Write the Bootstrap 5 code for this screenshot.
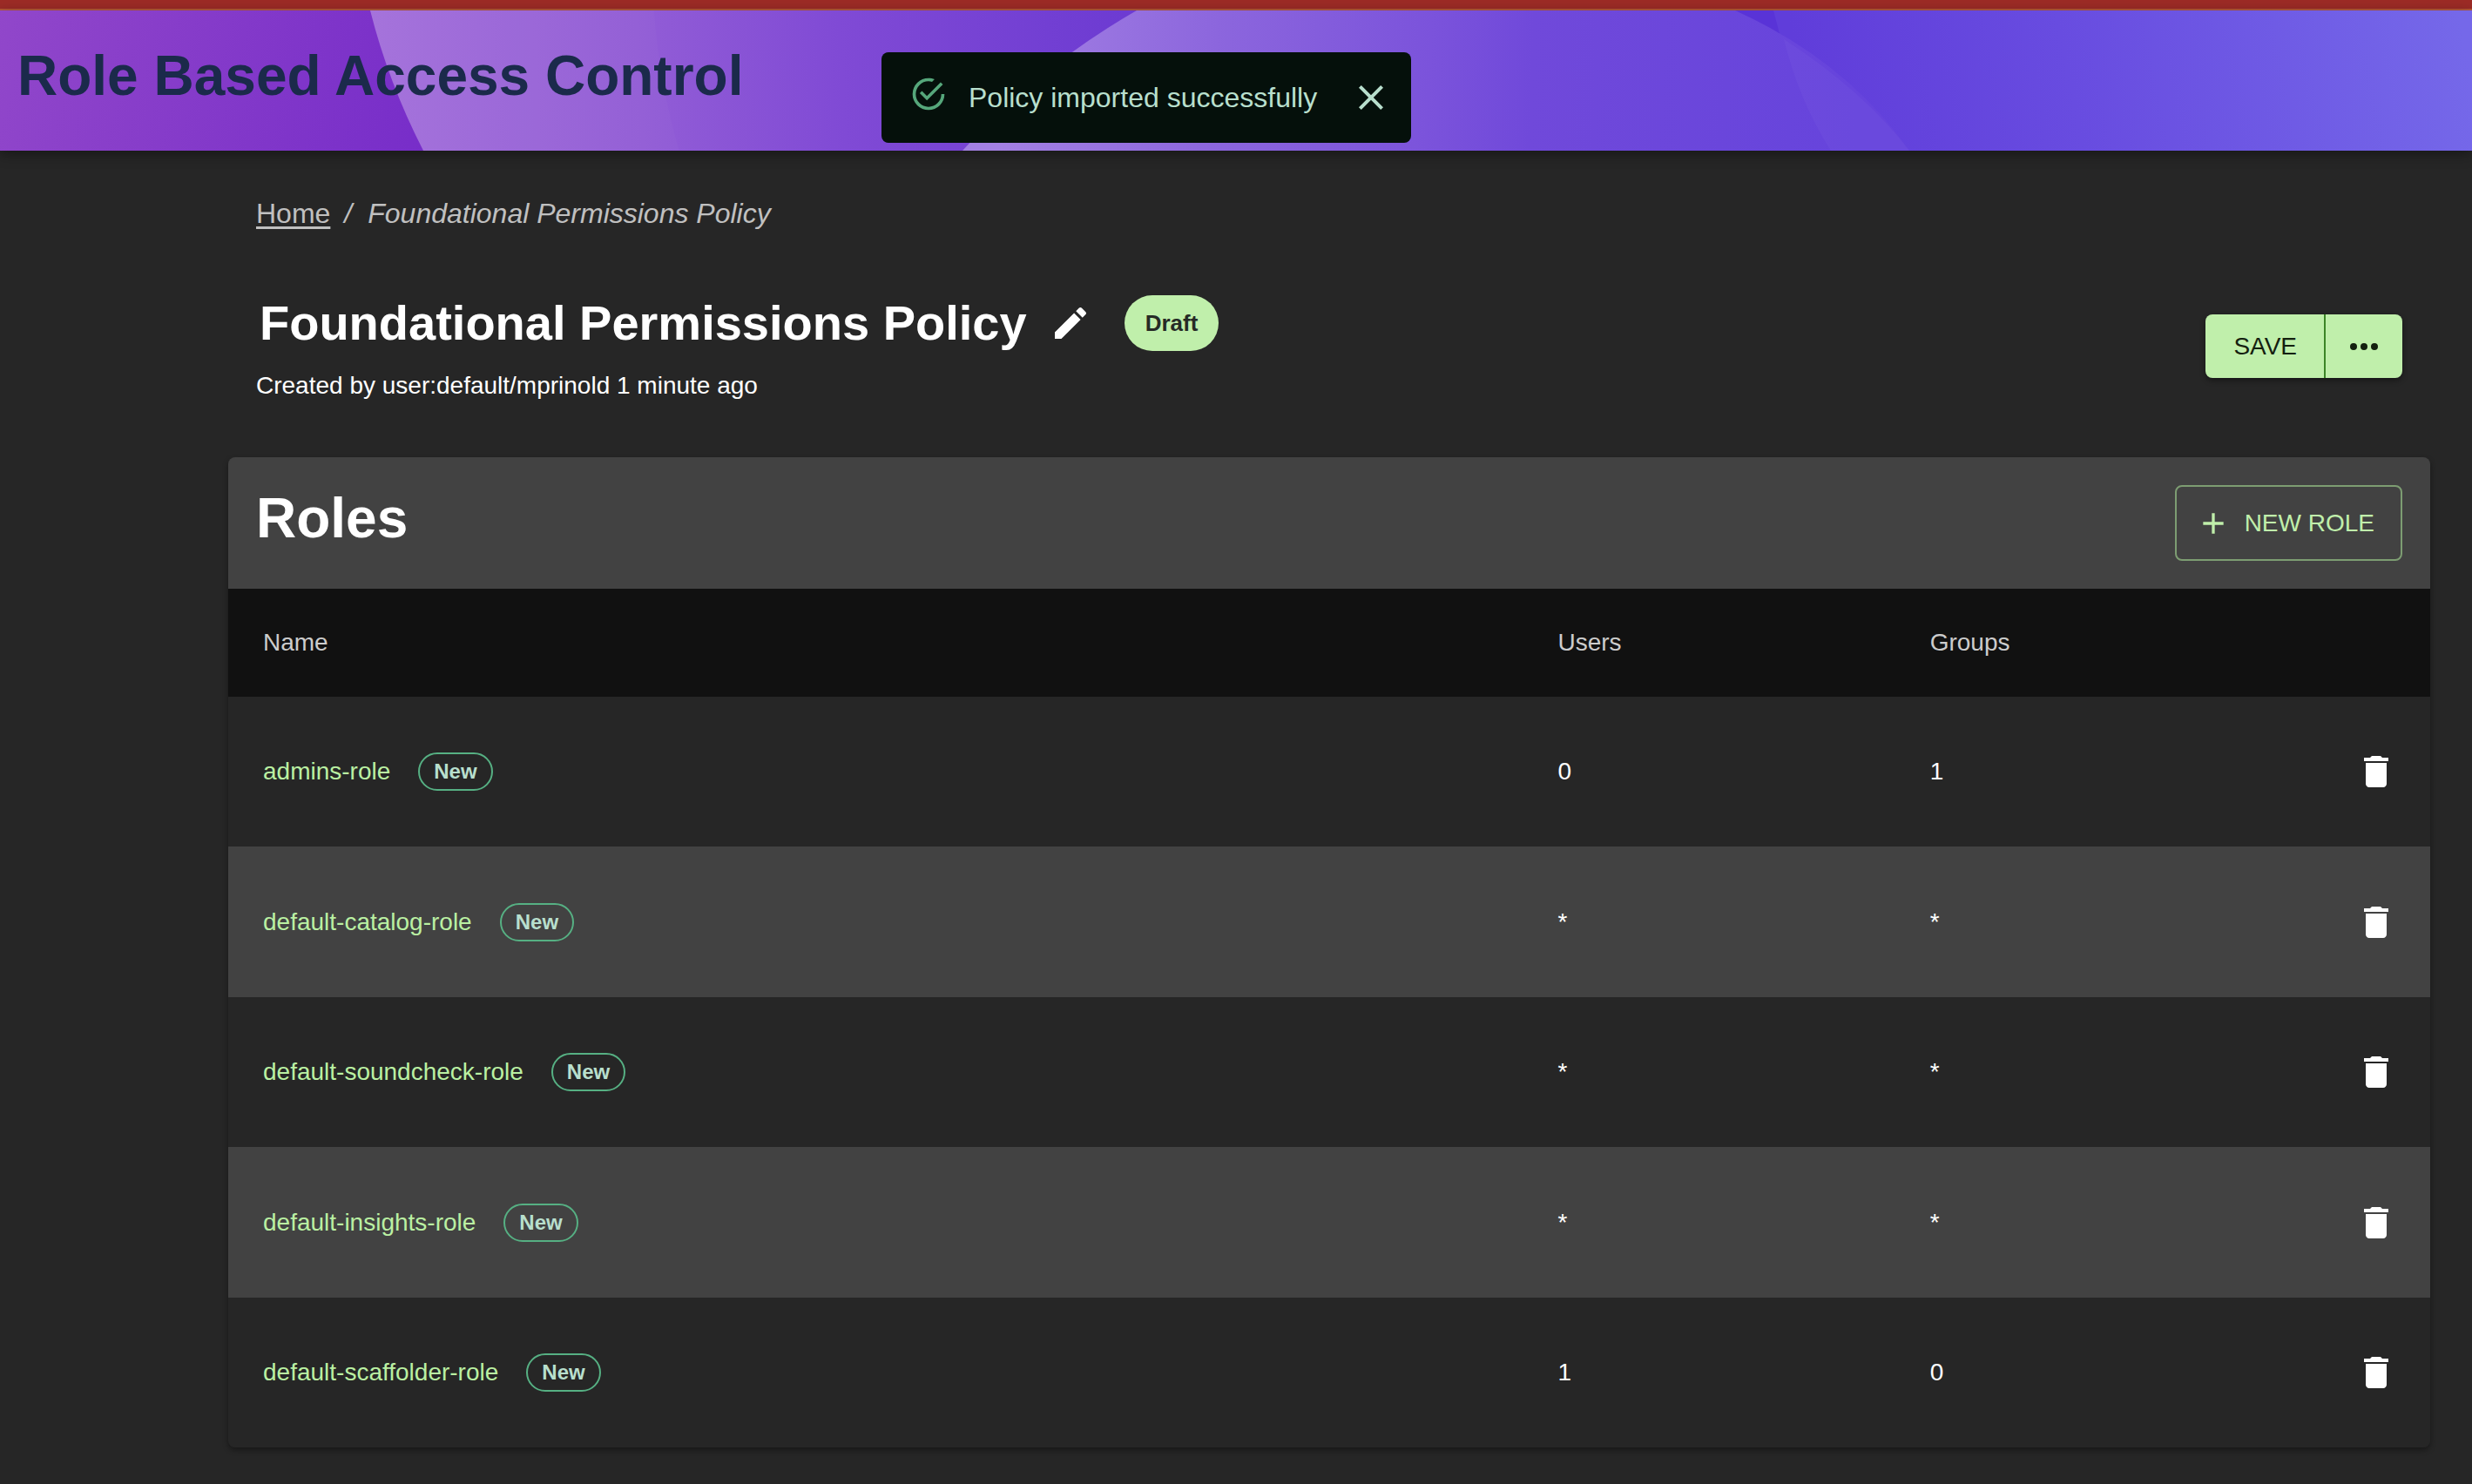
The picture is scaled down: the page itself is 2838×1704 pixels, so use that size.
<!DOCTYPE html>
<html lang="en" data-bs-theme="dark">
<head>
<meta charset="utf-8">
<meta name="viewport" content="width=device-width, initial-scale=1">
<title>Role Based Access Control</title>
<link href="https://cdn.jsdelivr.net/npm/bootstrap@5.3.0/dist/css/bootstrap.min.css" rel="stylesheet">
<style>
  body { font-family: "Liberation Sans", Arial, sans-serif; font-size: 28px; line-height: 40px; background: #262626; color: #fff; min-height: 100vh; }
  svg { display: block; flex: none; fill: currentColor; }
  h1, h2, h3 { margin: 0; font-weight: 700; }
  .env-strip { height: 12px; background: #9c2b26; border-bottom: 2px solid #b4593b; }
  .app-header { height: 161px; box-shadow: 0 4px 14px rgba(0,0,0,.4); }
  .app-header h1 { font-size: 64px; line-height: 72px; color: #1b2a4b; padding: 39px 20px 0; }
  .header-art { width: 100%; height: 100%; top: 0; left: 0; }
  .snack { top: 60px; left: 1012px; width: 608px; height: 104px; border-radius: 8px; background: #05100b; color: #b8dfcd; font-size: 32px; padding: 0 22px 0 32px; z-index: 10; }
  .snack .tick { color: #56a77b; margin: 0 24px 8px 0; }
  .plain { background: none; border: 0; padding: 0; color: inherit; }
  .page-body { padding: 52px 48px 24px 262px; }
  .intro { padding: 0 32px; }
  .crumbs { --bs-breadcrumb-divider-color: #bfbfbf; font-size: 32px; color: #c0c0c0; margin-bottom: 74px; }
  .crumbs a { color: inherit; text-underline-offset: 4px; text-decoration-thickness: 3px; }
  .crumbs .breadcrumb-item + .breadcrumb-item { padding-left: 16px; color: inherit; }
  .crumbs .breadcrumb-item + .breadcrumb-item::before { padding-right: 18px; }
  .policy-line { gap: 26px; }
  .policy-title { font-size: 56px; line-height: 64px; padding-left: 4px; }
  .draft-chip { background: #c0efab; color: #262a26; font-size: 26px; font-weight: 700; height: 64px; padding: 0 24px; margin-left: 12px; }
  .byline { margin: 20px 0 62px; }
  .btn { font-size: 28px; line-height: 40px; border-radius: 8px; }
  .btn-mint { --bs-btn-color: #14200f; --bs-btn-bg: #c0efab; --bs-btn-hover-bg: #aee496; height: 73px; border: 0; padding: 0 32px; }
  .save-group { border-radius: 8px; box-shadow: 0 3px 6px rgba(0,0,0,.4); margin-top: 22px; }
  .save-group .btn-more { padding: 0 20px; border-left: 2px solid #3c8527; }
  .btn-line-mint { --bs-btn-color: #c0efab; --bs-btn-border-color: #7d9d72; --bs-btn-hover-color: #c0efab; --bs-btn-hover-bg: #4b5548; --bs-btn-hover-border-color: #c0efab; border-width: 2px; height: 87px; padding: 0 30px 0 22px; gap: 16px; }
  .roles-card { border-radius: 8px; overflow: hidden; box-shadow: 0 3px 6px rgba(0,0,0,.4); }
  .roles-head { background: #424242; height: 151px; padding: 0 32px; }
  .roles-head h2 { font-size: 64px; line-height: 72px; padding-bottom: 12px; }
  .roles-table { --bs-table-bg: transparent; --bs-table-color: #fff; table-layout: fixed; margin: 0; }
  .roles-table > :not(caption) > * > * { border: 0; padding: 0 40px; vertical-align: middle; }
  .roles-table > tbody > tr > td:last-child { padding-right: 38px; }
  .roles-table thead th { height: 124px; background: #111; color: #ccc; font-weight: 400; }
  .roles-table tbody td { height: 173px; background: #262626; }
  .roles-table tbody tr:nth-child(odd) td { height: 172px; }
  .roles-table tbody tr:nth-child(even) td { background: #424242; }
  .roles-table .col-name { width: 58.8%; }
  .roles-table .col-count { width: 16.9%; }
  .roles-table tbody a { color: #baf0a2; text-decoration: none; }
  .new-chip { border: 2px solid #56b083; color: #b8dfcd; font-size: 24px; line-height: 40px; font-weight: 700; padding: 0 16px; margin-left: 32px; }
</style>
<script src="https://cdn.jsdelivr.net/npm/bootstrap@5.3.0/dist/js/bootstrap.bundle.min.js"></script>
</head>
<body>
<svg width="0" height="0" class="position-absolute" aria-hidden="true">
  <symbol id="trash" viewBox="0 0 24 24"><path d="M6 19c0 1.1.9 2 2 2h8c1.1 0 2-.9 2-2V7H6v12zM19 4h-3.500l-1-1h-5l-1 1H5v2h14V4z"/></symbol>
</svg>
<div class="env-strip"></div>
<header class="app-header position-relative">
  <svg class="header-art position-absolute" viewBox="0 12 2838 161" preserveAspectRatio="none" aria-hidden="true">
    <defs>
      <linearGradient id="g0" gradientUnits="userSpaceOnUse" x1="0" y1="0" x2="500" y2="140"><stop offset="0" stop-color="#9147ca"/><stop offset="1" stop-color="#772dc9"/></linearGradient>
      <linearGradient id="g1" gradientUnits="userSpaceOnUse" x1="430" y1="60" x2="1290" y2="10"><stop offset="0" stop-color="#a471db"/><stop offset=".35" stop-color="#925dd6"/><stop offset=".62" stop-color="#804ad5"/><stop offset="1" stop-color="#6d3bd2"/></linearGradient>
      <linearGradient id="g2" gradientUnits="userSpaceOnUse" x1="1150" y1="90" x2="2130" y2="130"><stop offset="0" stop-color="#a380e3"/><stop offset=".25" stop-color="#8c66dd"/><stop offset=".5" stop-color="#7b53db"/><stop offset=".62" stop-color="#7049da"/><stop offset="1" stop-color="#6644dc"/></linearGradient>
      <linearGradient id="g3" gradientUnits="userSpaceOnUse" x1="2080" y1="150" x2="2820" y2="0"><stop offset="0" stop-color="#603dda"/><stop offset=".4" stop-color="#684ce0"/><stop offset="1" stop-color="#7568e9"/></linearGradient>
    </defs>
    <rect y="12" width="600" height="161" fill="url(#g0)"/>
    <path d="M425 12Q446 95 486 173H1400V12Z" fill="url(#g1)"/>
    <path d="M751 12Q757 95 780 173H486Q446 95 425 12Z" fill="#fff" opacity=".02"/>
    <path d="M1960 12H2838V173H2150Z" fill="url(#g3)"/>
    <path d="M1980 12H2036L2048 58Z" fill="#5933d7"/>
    <path d="M1305 12Q1190 78 1105 173H2192Q2120 70 1992 12Z" fill="url(#g2)"/>
    <path d="M2048 45Q2065 115 2102 173H2192Q2140 105 2048 45Z" fill="#fff" opacity=".03"/>
  </svg>
  <h1 class="position-relative">Role Based Access Control</h1>
</header>
<div class="snack position-absolute d-flex align-items-center" role="alert">
  <svg class="tick" width="44" height="44" viewBox="0 0 24 24"><path d="M20,12A8,8 0 0,1 12,20A8,8 0 0,1 4,12A8,8 0 0,1 12,4C12.76,4 13.5,4.11 14.2,4.31L15.77,2.74C14.61,2.26 13.34,2 12,2A10,10 0 0,0 2,12A10,10 0 0,0 12,22A10,10 0 0,0 22,12H20M7.91,10.08L6.5,11.5L11,16L21,6L19.59,4.58L11,13.17L7.91,10.08Z"/></svg>
  <span class="flex-grow-1">Policy imported successfully</span>
  <button type="button" class="plain" aria-label="Close"><svg width="48" height="48" viewBox="0 0 24 24"><path d="M19 6.410 17.590 5 12 10.590 6.410 5 5 6.410 10.590 12 5 17.590 6.410 19 12 13.410 17.590 19 19 17.590 13.410 12z"/></svg></button>
</div>

<main class="page-body">
  <div class="intro">
    <nav aria-label="breadcrumb">
      <ol class="breadcrumb crumbs">
        <li class="breadcrumb-item"><a href="#">Home</a></li>
        <li class="breadcrumb-item fst-italic" aria-current="page">Foundational Permissions Policy</li>
      </ol>
    </nav>
    <div class="d-flex justify-content-between align-items-start">
      <div>
        <div class="policy-line d-flex align-items-center">
          <h2 class="policy-title">Foundational Permissions Policy</h2>
          <button type="button" class="plain" aria-label="Edit policy"><svg width="48" height="48" viewBox="0 0 24 24"><path d="M3 17.250V21h3.750L17.810 9.940l-3.750-3.750L3 17.250zM20.710 7.040c.39-.39.39-1.020 0-1.410l-2.340-2.340c-.39-.39-1.020-.39-1.410 0l-1.830 1.830 3.750 3.750 1.830-1.830z"/></svg></button>
          <span class="draft-chip rounded-pill d-flex align-items-center">Draft</span>
        </div>
        <p class="byline">Created by user:default/mprinold 1 minute ago</p>
      </div>
      <div class="btn-group save-group">
        <button type="button" class="btn btn-mint">SAVE</button>
        <button type="button" class="btn btn-mint btn-more" aria-label="More actions"><svg width="48" height="48" viewBox="0 0 24 24"><path d="M6 10a2 2 0 100 4 2 2 0 000-4zm12 0a2 2 0 100 4 2 2 0 000-4zm-6 0a2 2 0 100 4 2 2 0 000-4z"/></svg></button>
      </div>
    </div>
  </div>

  <section class="roles-card">
    <div class="roles-head d-flex justify-content-between align-items-center">
      <h2>Roles</h2>
      <button type="button" class="btn btn-line-mint d-flex align-items-center"><svg width="40" height="40" viewBox="0 0 24 24"><path d="M19 13h-6v6h-2v-6H5v-2h6V5h2v6h6v2z"/></svg>NEW ROLE</button>
    </div>
    <table class="table roles-table">
      <thead>
        <tr><th class="col-name" scope="col">Name</th><th class="col-count" scope="col">Users</th><th class="col-count" scope="col">Groups</th><th aria-label="Actions"></th></tr>
      </thead>
      <tbody>
        <tr><td><div class="d-flex align-items-center"><a href="#">admins-role</a><span class="new-chip rounded-pill">New</span></div></td><td>0</td><td>1</td><td><button type="button" class="plain d-block ms-auto" aria-label="Delete admins-role"><svg width="48" height="48"><use href="#trash"/></svg></button></td></tr>
        <tr><td><div class="d-flex align-items-center"><a href="#">default-catalog-role</a><span class="new-chip rounded-pill">New</span></div></td><td>*</td><td>*</td><td><button type="button" class="plain d-block ms-auto" aria-label="Delete default-catalog-role"><svg width="48" height="48"><use href="#trash"/></svg></button></td></tr>
        <tr><td><div class="d-flex align-items-center"><a href="#">default-soundcheck-role</a><span class="new-chip rounded-pill">New</span></div></td><td>*</td><td>*</td><td><button type="button" class="plain d-block ms-auto" aria-label="Delete default-soundcheck-role"><svg width="48" height="48"><use href="#trash"/></svg></button></td></tr>
        <tr><td><div class="d-flex align-items-center"><a href="#">default-insights-role</a><span class="new-chip rounded-pill">New</span></div></td><td>*</td><td>*</td><td><button type="button" class="plain d-block ms-auto" aria-label="Delete default-insights-role"><svg width="48" height="48"><use href="#trash"/></svg></button></td></tr>
        <tr><td><div class="d-flex align-items-center"><a href="#">default-scaffolder-role</a><span class="new-chip rounded-pill">New</span></div></td><td>1</td><td>0</td><td><button type="button" class="plain d-block ms-auto" aria-label="Delete default-scaffolder-role"><svg width="48" height="48"><use href="#trash"/></svg></button></td></tr>
      </tbody>
    </table>
  </section>
</main>
</body>
</html>
